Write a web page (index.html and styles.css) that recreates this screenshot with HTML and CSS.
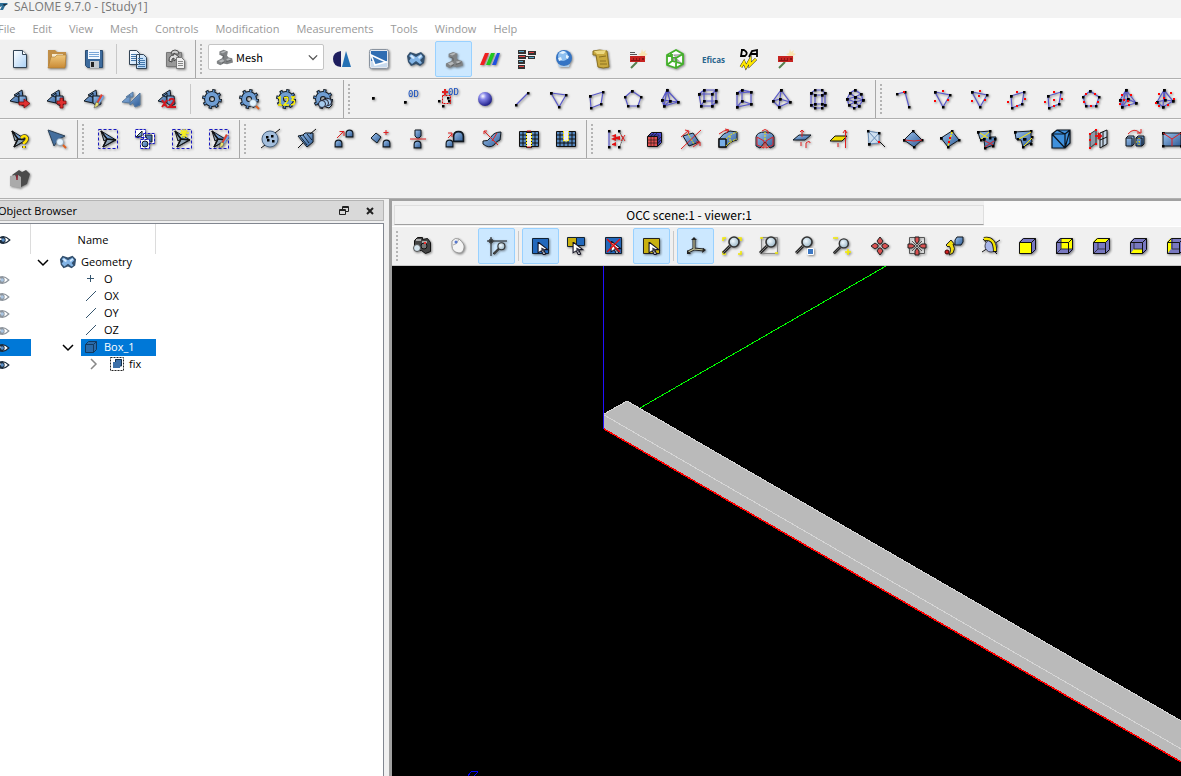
FILE: index.html
```
<!DOCTYPE html>
<html lang="en">

<head>
  <meta charset="UTF-8">
  <meta name="viewport" content="width=device-width, initial-scale=1.0">
  <title>SALOME 9.7.0 - [Study1]</title>
  <link rel="stylesheet" href="styles.css">
</head>

<body>
  <!-- shared shapes -->
  <svg class="defs" aria-hidden="true">
    <defs>
      <linearGradient id="blue" x1="0" y1="0" x2="1" y2="1">
        <stop offset="0" stop-color="#9cc3ee" />
        <stop offset="1" stop-color="#2f5c96" />
      </linearGradient>
      <linearGradient id="paper" x1="0" y1="0" x2="1" y2="1">
        <stop offset="0" stop-color="#ffffff" />
        <stop offset="1" stop-color="#a9d0f5" />
      </linearGradient>
      <linearGradient id="folder" x1="0" y1="0" x2="0" y2="1">
        <stop offset="0" stop-color="#f0c87c" />
        <stop offset="1" stop-color="#c98a35" />
      </linearGradient>
      <radialGradient id="ball" cx=".35" cy=".3" r=".7">
        <stop offset="0" stop-color="#ffffff" />
        <stop offset=".35" stop-color="#8484e8" />
        <stop offset="1" stop-color="#22228c" />
      </radialGradient>
      <radialGradient id="glass" cx=".4" cy=".4" r=".6">
        <stop offset="0" stop-color="#f2faff" />
        <stop offset="1" stop-color="#9db8c8" />
      </radialGradient>
      <marker id="node" markerUnits="userSpaceOnUse" markerWidth="4" markerHeight="4" refX="1" refY="1">
        <rect width="2.500" height="2.500" fill="#000" />
      </marker>
      <marker id="mid" markerUnits="userSpaceOnUse" markerWidth="4" markerHeight="4" refX="1" refY="1">
        <rect width="2" height="2" fill="#f00" />
      </marker>
      <symbol id="mesh" viewBox="0 0 20 20">
        <path class="solid" d="M0 12 9 4v10zM4 6l8-5 1 7H8z" />
        <path class="solid" d="M9 7h7l1 8-4 2-4-3z" />
      </symbol>
      <symbol id="gear" viewBox="0 0 20 20">
        <circle cx="10" cy="10" r="8" fill="none" stroke="#101820" stroke-width="4" stroke-dasharray="3 3.28" />
        <circle cx="10" cy="10" r="5" fill="none" stroke="#101820" stroke-width="6" />
        <circle cx="10" cy="10" r="8" fill="none" stroke="#5a8ac4" stroke-width="2" stroke-dasharray="1.6 4.68" stroke-dashoffset="-.7" />
        <circle cx="10" cy="10" r="5" fill="none" stroke="#6f9dd2" stroke-width="4" />
      </symbol>
      <symbol id="arrowmesh" viewBox="0 0 20 20">
        <path class="solid" d="M3 2l15 9-13 7 4-8z" />
        <path fill="#8fa3b4" stroke="#111" d="M3 2l6 8-3 2zM5 18l4-8 8 1z" />
        <path stroke="#111" fill="none" stroke-width="1.500" d="M3 2l6 8 9 1M9 10l-4 8" />
      </symbol>
      <symbol id="lens" viewBox="0 0 20 20">
        <path stroke="#222" stroke-width="3" d="M1 17l7-7" />
        <path stroke="#777" stroke-width="1" d="M1 17l7-7" />
        <circle cx="12" cy="6" r="5" fill="url(#glass)" stroke="#333" stroke-width="1.600" />
      </symbol>
      <symbol id="cursor" viewBox="0 0 12 12">
        <path fill="#fff" stroke="#112" d="M1 0v10l3-2 2 4 2-1-2-4h4z" />
        <path fill="#334" d="M4 5l4 2-2 1 1 3-3-4z" />
      </symbol>
      <symbol id="slab" viewBox="0 0 20 20">
        <path class="solid" d="M1 13L7 8h12l-6 5z" />
      </symbol>
      <symbol id="thumb" viewBox="0 0 8 8">
        <path class="solid" d="M1 7V4q0-3 3-3t3 3v3z" />
      </symbol>
      <symbol id="cube" viewBox="0 0 20 20">
        <path fill="#7878c0" d="M1 6l4-4h13v12l-4 4H1z" />
      </symbol>
      <symbol id="cubelines" viewBox="0 0 20 20">
        <path class="wire" d="M1.500 6.500h12v11h-12zM1.500 6.500l4-4h12v11l-4 4M13.500 6.500l4-4" />
      </symbol>
      <symbol id="geom" viewBox="0 0 20 20">
        <path fill="#33506e" d="M1 7l3-4 6 2 5-2 4 4-1 7-4 3-4-2-5 2-3-4z" />
        <path fill="#82b4e6" d="M3 7l2-2 5 3 5-3 2 3-3 3 2 3-2 1-4-3-4 3-3-3 2-3z" />
        <path fill="#d5ebff" d="M4 7l2-1 3 3-2 1zM12 8l3-2 1 1-3 3z" />
      </symbol>
      <symbol id="smesh" viewBox="0 0 20 20">
        <path fill="#7f8284" d="M1 14l6-3 1-3-4-1V3l5-2 5 2-1 5 2 2 4 1 1 5-7 2-4-1-4 2-4-2z" />
        <path fill="#b5b8ba" d="M5 4l5-2 2 1-4 2zM3 14l5-2 2 2-4 2zM12 12l3-1 3 1-4 2z" />
        <path stroke="#5d6062" fill="none" d="M6 7l3 1v3M12 15l6-2M7 17l3-2" />
      </symbol>
      <symbol id="eye" viewBox="0 0 16 12">
        <path fill="#fff" stroke="currentColor" stroke-width="1.400" d="M0 6q7-8 15 0-8 8-15 0z" />
        <circle cx="6" cy="6" r="4" fill="currentColor" />
        <circle cx="7" cy="6" r="2" fill="#5a8fc8" />
        <path fill="#fff" d="M3 4h2v2H3z" />
      </symbol>
      <symbol id="down" viewBox="0 0 12 12">
        <path fill="none" stroke="currentColor" stroke-width="1.500" d="M1 4l5 5 5-5" />
      </symbol>
      <symbol id="pen" viewBox="0 0 20 20">
        <path fill="#e04030" d="M17 5l3 2-6 10-3-1z" />
        <path fill="#6fa8e8" d="M19 6l1 2-6 9-1-1z" />
        <path fill="#e8e070" stroke="#555" stroke-width=".6" d="M12 13l3 1-1 3-4 2z" />
      </symbol>
      <symbol id="yacs" viewBox="0 0 20 20">
        <path fill="#f8e4b0" d="M14 0l1 3 3-2-1 3 3 1-3 2 1 3-3-1-2 1v-3l-3-2 3-1z" />
        <path stroke="#56804e" stroke-width="2" d="M3 19l6-6" />
        <path fill="#c62320" d="M2 7h15v6H2z" />
        <path fill="#8a1414" d="M3 11h2V9h1v2h2V9h1v2h2V9h1v3H3zM14 9h2v2h-2z" />
      </symbol>
    </defs>
  </svg>

  <header class="titlebar">
    <svg class="logo" width="10" height="12" viewBox="0 0 10 12"><path fill="#2d6e96" d="M0 2h8L5 5 3 9H0l2-4-2 1z" /><path fill="#1b2c3c" d="M3 3h5L4 5z" /></svg>
    <h1>SALOME 9.7.0 - [Study1]</h1>
  </header>

  <nav class="menubar">
    <a href="#">File</a>
    <a href="#">Edit</a>
    <a href="#">View</a>
    <a href="#">Mesh</a>
    <a href="#">Controls</a>
    <a href="#">Modification</a>
    <a href="#">Measurements</a>
    <a href="#">Tools</a>
    <a href="#">Window</a>
    <a href="#">Help</a>
  </nav>

  <div class="toolrow">
    <div class="toolbar first">
      <button class="tool" aria-label="New"><svg viewBox="0 0 20 20"><path fill="url(#paper)" stroke="#345" d="M3.500 1.500h9l4 4v13h-13z" /><path fill="#fff" stroke="#345" d="M12.500 1.500v4h4" /></svg></button>
      <button class="tool" aria-label="Open"><svg viewBox="0 0 20 20"><path fill="#c18f48" d="M1 1h7l2 2h9v14H1z" /><path fill="#f6ead0" d="M5 5h11v5H5z" /><path fill="url(#folder)" stroke="#a87834" stroke-width=".6" d="M1 19L4 8h4l2-2h9l-1 13z" /></svg></button>
      <button class="tool" aria-label="Save"><svg viewBox="0 0 20 20"><path fill="#3d6b9d" stroke="#2b4c70" d="M1.500 1.500h17v17h-15l-2-2z" /><path fill="#f4f9ff" d="M4 1h12v9H4z" /><path stroke="#7aa7d8" d="M5 3.500h10M5 5.500h10M5 7.500h10" /><path fill="#c4cad0" d="M6 12h9v7H6z" /><path fill="#222" d="M7 13h3v5H7z" /></svg></button>
      <span class="sep"></span>
      <button class="tool" aria-label="Copy"><svg viewBox="0 0 20 20"><path fill="url(#paper)" stroke="#345" d="M1.500 1.500h7l3 3v11h-10zM8.500 5.500h7l3 3v11h-10z" /><path stroke="#4477aa" d="M3 5.500h5M3 7.500h5M3 9.500h5M3 11.500h5M10 9.500h5M10 11.500h7M10 13.500h7M10 15.500h7M10 17.500h7" /></svg></button>
      <button class="tool" aria-label="Paste"><svg viewBox="0 0 20 20"><path fill="#999" stroke="#777" d="M1.500 3.500h15v14h-15z" /><path fill="#ccc" stroke="#555" d="M6 5q0-4 4-4t4 4z" /><path fill="#ddd" stroke="#444" d="M4 12q0-6 5-6V4l5 4-5 4v-3q-3 0-2 4z" /><path fill="#eee" stroke="#777" d="M11.500 8.500h5l3 3v8h-8z" /><path stroke="#888" d="M13 12.500h5M13 14.500h5M13 16.500h5" /></svg></button>
    </div>
    <div class="toolbar">
      <span class="grip"></span>
      <div class="combo">
        <svg class="combo-icon" viewBox="0 0 20 20"><use href="#smesh" /></svg>
        <select aria-label="Module"><option>Mesh</option></select>
        <svg class="combo-arrow" viewBox="0 0 12 12"><use href="#down" /></svg>
      </div>
      <button class="tool flat" aria-label="Shaper"><svg viewBox="0 0 20 20"><path fill="#1e1e5e" d="M9 2v16Q1 17 1 10t8-8z" /><path fill="#2470b4" d="M14 2l5 16h-9z" /></svg></button>
      <button class="tool" aria-label="Plane"><svg viewBox="0 0 20 20"><rect x=".5" y=".5" width="19" height="19" rx="2" fill="#e4e8ee" stroke="#8a94a0" /><path fill="#2f6db2" d="M2 2h16v10H2z" /><path fill="#c9dbee" d="M2 12h16v6H2z" /><path fill="#3b76b6" stroke="#fff" stroke-width="1.600" d="M2 6l15 7-11 3z" /></svg></button>
      <button class="tool" aria-label="Geometry"><svg viewBox="0 0 20 20"><use href="#geom" /></svg></button>
      <button class="tool active" aria-label="Mesh" aria-pressed="true"><svg viewBox="0 0 20 20"><use href="#smesh" x="1" y="2" width="18" height="18" /></svg></button>
      <button class="tool" aria-label="ParaViS"><svg viewBox="0 0 20 20"><path fill="#f02020" d="M5 4h4L4 16H0z" /><path fill="#1fc81f" d="M11 4h4l-5 12H6z" /><path fill="#1f50e0" d="M17 4h3l-4 12h-4z" /></svg></button>
      <button class="tool flat" aria-label="YACS"><svg viewBox="0 0 20 20"><path fill="#333" d="M1 1h8v4H1zM11 2h8v4h-8zM1 6h8v4H1zM11 7h7v3h-7zM1 11h7v4H1zM1 16h7v4H1zM8 7h4v1H8z" /><path stroke="#56a6c8" d="M2 2.500h5M12 8.500h5M2 12.500h4" /><path stroke="#e04040" d="M12 3.500h5M2 7.500h6M2 17.500h5" /></svg></button>
      <button class="tool" aria-label="Globe"><svg viewBox="0 0 20 20"><circle cx="10" cy="9" r="8" fill="#3574c4" /><circle cx="9" cy="7" r="5" fill="#8fc0f0" /><path fill="#e6f4ff" d="M5 4l4-2 3 1-3 2zM12 6l3 1-1 3-2-1zM4 9l3-1 1 3-3 1z" /><path fill="#b0d0ee" d="M4 15q6 4 12 0l-1 3H5z" /></svg></button>
      <button class="tool" aria-label="Document"><svg viewBox="0 0 20 20"><path fill="#c9a93e" stroke="#8a7020" d="M2 2q6-2 14 0l2 16q-6 2-11 0L5 6H2z" /><path fill="#ecd880" d="M3 2l12-1-2 4H6z" /><path stroke="#8a7020" d="M8 8l7-1M9 12h6M9 15h7" /></svg></button>
      <button class="tool flat" aria-label="Wizard"><svg viewBox="0 0 20 20"><use href="#yacs" /><path stroke="#555" d="M2 3.500h5M2 5.500h7" /></svg></button>
      <button class="tool" aria-label="HexaBlock"><svg viewBox="0 0 20 20"><path fill="#fff" stroke="#43b02a" stroke-width="1.800" stroke-linejoin="round" d="M2 6l9-5 7 4v10l-7 4-9-3zM2 6l9 3 7-4M11 9v10M6 7V3M7 12l-5 4M7 5v7l11 3" /></svg></button>
      <button class="tool flat" aria-label="Eficas"><svg class="wordmark" viewBox="0 0 20 20"><text x="0" y="14">Eficas</text></svg></button>
      <button class="tool flat" aria-label="ADAO"><svg viewBox="0 0 20 20"><path fill="none" stroke="#000" stroke-width="1.800" d="M2 1h3q5 3 1 6H2l1-6M10 8l3-6 5-1v7M11 5h7" /><path fill="none" stroke="#222" stroke-width="3" d="M2 18l3-5 2 5 4-7v5l6-6" /><path fill="none" stroke="#ffe800" stroke-width="2.200" d="M2 18l3-5 2 5 4-7v5l6-6" /></svg></button>
      <button class="tool flat" aria-label="Wizard two"><svg viewBox="0 0 20 20"><use href="#yacs" /></svg></button>
    </div>
  </div>

  <div class="toolrow">
    <div class="toolbar first">
      <button class="tool" aria-label="Import mesh"><svg viewBox="0 0 20 20"><use href="#mesh" /><path class="badge" d="M9 13h5v-3l6 4.500-6 4.500v-3H9z" /></svg></button>
      <button class="tool" aria-label="Create mesh"><svg viewBox="0 0 20 20"><use href="#mesh" /><path class="badge" d="M13 9h3v3h3v3h-3v4h-3v-4h-3v-3h3z" /></svg></button>
      <button class="tool" aria-label="Edit mesh"><svg viewBox="0 0 20 20"><use href="#mesh" /><use href="#pen" /></svg></button>
      <button class="tool" aria-label="Build compound"><svg viewBox="0 0 20 20"><path fill="url(#blue)" stroke="#55789e" d="M1 13l8-7v8zM5 8l7-5v5zM9 14l10-10v12l-5 2-2-4-3 2z" /></svg></button>
      <button class="tool" aria-label="Copy mesh"><svg viewBox="0 0 20 20"><use href="#mesh" /><path fill="none" stroke="#d01820" stroke-width="2" d="M4 11l5 7M9 11l-5 7M11 12q1-3 4-2 3 2-4 8h7" /></svg></button>
      <span class="sep"></span>
      <button class="tool" aria-label="Compute"><svg viewBox="0 0 20 20"><use href="#gear" /></svg></button>
      <button class="tool" aria-label="Preview"><svg viewBox="0 0 20 20"><use href="#gear" /><circle cx="14" cy="14" r="3.500" fill="#e4f4ff" stroke="#89a" stroke-width=".7" /><path stroke="#e06020" stroke-width="2" d="M17 17l3 3" /></svg></button>
      <button class="tool" aria-label="Evaluate"><svg viewBox="0 0 20 20"><use href="#gear" /><path fill="none" stroke="#fff200" stroke-width="1.400" d="M2 9l2-1v8M2 16h4M8 9q4-2 4 1 0 2-4 6h5M15 8h3l-2 3q4 0 2 4l-3 1" /></svg></button>
      <button class="tool" aria-label="Mesh order"><svg viewBox="0 0 20 20"><use href="#gear" /><path fill="#a6cbee" stroke="#111" d="M5 15l6-5 3-1 4 2 1 5-3 3z" /><circle cx="15" cy="13" r="3.500" class="pale" /><circle cx="12" cy="14" r="3.500" class="pale" /><circle cx="9" cy="15" r="3.500" class="pale" /></svg></button>
    </div>
    <div class="toolbar">
      <span class="grip"></span>
      <button class="tool" aria-label="Node"><svg viewBox="0 0 20 20"><path class="m" d="M9 9h0" /></svg></button>
      <button class="tool" aria-label="0D element"><svg viewBox="0 0 20 20"><path class="m" d="M4 13h0" /><text class="zero-d" x="7" y="8">0D</text></svg></button>
      <button class="tool" aria-label="0D on all nodes"><svg viewBox="0 0 20 20"><path class="dots" d="M1 12l9-3M5 17l6-5" /><rect x="4.500" y="6.500" width="8" height="8" fill="none" stroke="#e00000" stroke-dasharray="2 1" /><path stroke="#e02020" stroke-width="2" d="M7 0v6M4 3h6" /><text class="zero-d" x="10" y="6">0D</text></svg></button>
      <button class="tool" aria-label="Ball"><svg viewBox="0 0 20 20"><circle cx="10" cy="10" r="7" fill="url(#ball)" /></svg></button>
      <button class="tool" aria-label="Edge"><svg viewBox="0 0 20 20"><path class="m" d="M4 16L16 4" /></svg></button>
      <button class="tool" aria-label="Triangle"><svg viewBox="0 0 20 20"><path class="m" d="M2 4l15 2-7 12z" /></svg></button>
      <button class="tool" aria-label="Quadrangle"><svg viewBox="0 0 20 20"><path class="m" d="M4 7l13-4-2 12-10 4z" /></svg></button>
      <button class="tool" aria-label="Polygon"><svg viewBox="0 0 20 20"><path class="m" d="M9 2l9 6-3 9H5L2 8z" /></svg></button>
      <button class="tool" aria-label="Tetrahedron"><svg viewBox="0 0 20 20"><path class="m" d="M7 1l11 12-14 4zM2 11L7 1l3 11 8 1M2 11l2 6 6-5z" /></svg></button>
      <button class="tool" aria-label="Hexahedron"><svg viewBox="0 0 20 20"><path class="m" d="M2 5l2 12h11V5zM2 5l5-4h12l-4 4M15 17l4-4V1M7 1v11h12M4 17l3-5" /></svg></button>
      <button class="tool" aria-label="Pentahedron"><svg viewBox="0 0 20 20"><path class="m" d="M3 4l5-3 9 2v12l-14 3zM3 18l5-6V1M8 12l9 3M3 4l14-1" /></svg></button>
      <button class="tool" aria-label="Pyramid"><svg viewBox="0 0 20 20"><path class="m" d="M10 1L2 12l6 6 11-5zM8 18L10 1l-1 9-7 2M9 10l10 3" /></svg></button>
      <button class="tool" aria-label="Hexagonal prism"><svg viewBox="0 0 20 20"><path class="m" d="M3 4l4-3h7l3 3v12l-3 3H7l-4-3zM3 4l4 2h7l3-2M7 6v9M14 6v9M3 16l4-1h7l3 1" /></svg></button>
      <button class="tool" aria-label="Polyhedron"><svg viewBox="0 0 20 20"><path class="m" d="M10 1l6 4 2 6-4 6-5 2-5-3-2-6 3-6zM5 4l5 4 6-3M10 8v5l4 4M2 10l8 3M4 16l6-3 8-2M10 8L2 10M10 8l8 3" /></svg></button>
    </div>
    <div class="toolbar">
      <span class="grip"></span>
      <button class="tool" aria-label="Quadratic edge"><svg viewBox="0 0 20 20"><path class="m" d="M1 5l8-2 4 15" /><path class="q" d="M8 3h0" /></svg></button>
      <button class="tool" aria-label="Quadratic triangle"><svg viewBox="0 0 20 20"><path class="m" d="M2 3l15 3-7 12z" /><path class="q" d="M10 2L2 12l13-1" /></svg></button>
      <button class="tool" aria-label="Biquadratic triangle"><svg viewBox="0 0 20 20"><path class="m" d="M2 3l15 3-7 12z" /><path class="q" d="M10 2L2 12l13-1-6-4" /></svg></button>
      <button class="tool" aria-label="Quadratic quadrangle"><svg viewBox="0 0 20 20"><path class="m" d="M4 7l13-4-2 12-10 4z" /><path class="q" d="M10 3L1 13l9 4 8-7" /></svg></button>
      <button class="tool" aria-label="Biquadratic quadrangle"><svg viewBox="0 0 20 20"><path class="m" d="M4 7l13-4-2 12-10 4z" /><path class="q" d="M10 3L1 13l9 4 8-7-8 1" /></svg></button>
      <button class="tool" aria-label="Quadratic polygon"><svg viewBox="0 0 20 20"><path class="m" d="M9 2l9 6-3 9H5L2 8z" /><path class="q" d="M5 5L3 13l7 4 7-4-3-8" /></svg></button>
      <button class="tool" aria-label="Quadratic tetrahedron"><svg viewBox="0 0 20 20"><path class="m" d="M8 1l10 13-14 4zM2 11L8 1l2 9 8 4M2 11l2 7 6-8z" /><path class="q" d="M4 6l6 6 3-6M2 15l9 1M6 11h0" /></svg></button>
      <button class="tool" aria-label="Quadratic pyramid"><svg viewBox="0 0 20 20"><path class="m" d="M9 1L2 13l6 5 10-6zM8 18L9 1l1 10-8 2M10 11l8 1" /><path class="q" d="M4 5l12-1 3 6-6 6-9 1-3-3M9 9h0" /></svg></button>
    </div>
  </div>

  <div class="toolrow">
    <div class="toolbar first">
      <button class="tool" aria-label="Mesh information"><svg viewBox="0 0 20 20"><use href="#arrowmesh" x="-1" /><path fill="none" stroke="#443" stroke-width="4" d="M11 9q4-4 6 0 0 3-3 5v1M14 17v2" /><path fill="none" stroke="#ffe000" stroke-width="2.400" d="M11 9q4-4 6 0 0 3-3 5v1M14 17v2" /></svg></button>
      <button class="tool" aria-label="Find element"><svg viewBox="0 0 20 20"><path fill="#456f9e" stroke="#2c4258" d="M1 1l17 6-6 3-5 7z" /><circle cx="13" cy="13" r="3.500" fill="#e4f4ff" stroke="#89a" stroke-width=".7" /><path stroke="#e06020" stroke-width="2" d="M16 16l3 3" /></svg></button>
    </div>
    <div class="toolbar">
      <span class="grip"></span>
      <button class="tool" aria-label="Create group"><svg viewBox="0 0 20 20"><rect class="dash" x=".5" y=".5" width="19" height="19" /><use href="#arrowmesh" /></svg></button>
      <button class="tool" aria-label="Groups from geometry"><svg viewBox="0 0 20 20"><path fill="#fff" stroke="#1818c0" stroke-dasharray="3 1" d="M.5.5h10v8H.5zM8.500 4.500h11v10h-11z" /><path class="solid" d="M1 8l6-6v5zM10 6h7v7h-3z" /><rect x="5.500" y="10.500" width="9" height="9" fill="#fff" stroke="#1818c0" stroke-dasharray="3 1" /><circle cx="10" cy="15" r="3" class="solid" /></svg></button>
      <button class="tool" aria-label="New group"><svg viewBox="0 0 20 20"><rect class="dash" x=".5" y=".5" width="19" height="19" /><use href="#arrowmesh" /><path stroke="#f4ee20" stroke-width="1.500" d="M12 0v9M8 4h9M9 1l6 7M15 1L9 8" /></svg></button>
      <button class="tool" aria-label="Edit group"><svg viewBox="0 0 20 20"><rect class="dash" x=".5" y=".5" width="19" height="19" /><use href="#arrowmesh" /><use href="#pen" /></svg></button>
    </div>
    <div class="toolbar">
      <span class="grip"></span>
      <button class="tool" aria-label="Free nodes"><svg viewBox="0 0 20 20"><circle cx="10" cy="10" r="8" fill="#a3bedc" stroke="#4a6482" /><path class="dots" d="M7 8l5-1 1 5-5-1" /><path class="arr" d="M15 4l5-4M1 19l4-3" /></svg></button>
      <button class="tool" aria-label="Free borders"><svg viewBox="0 0 20 20"><path class="solid" d="M1 7l5-1 2-2h8v9l-6 5z" /><path stroke="#123" fill="none" d="M3 7l7 9M6 6l6 8M10 5l5 6" /><path class="arr" d="M13 5l6-5M1 19l5-5" /></svg></button>
      <button class="tool" aria-label="Translate"><svg viewBox="0 0 20 20"><use href="#thumb" x="0" y="10" width="9" height="9" /><use href="#thumb" x="11" y="0" width="9" height="9" /><path class="move" d="M3 9l6-6M5.500 2.500H10V7" /></svg></button>
      <button class="tool" aria-label="Rotate"><svg viewBox="0 0 20 20"><path class="solid" d="M0 9l5-5 5 4-4 6z" /><use href="#thumb" x="11" y="10" width="9" height="9" /><path class="move" d="M15 1v5M12.500 3.500h5" /></svg></button>
      <button class="tool" aria-label="Symmetry"><svg viewBox="0 0 20 20"><path class="solid" d="M7 1h6v6l-2 2H9L7 7z" /><use href="#thumb" x="5" y="11" width="9" height="9" /><path class="move" d="M2 10h16" /></svg></button>
      <button class="tool" aria-label="Scale"><svg viewBox="0 0 20 20"><use href="#thumb" x="0" y="10" width="9" height="9" /><use href="#thumb" x="7" y="1" width="13" height="13" /><path class="move" d="M3 9l4-4M3 4h4v4" /></svg></button>
      <button class="tool" aria-label="Sewing"><svg viewBox="0 0 20 20"><path class="solid" d="M1 12q5 1 8-4 3-5 10-5l-1 8q-4 1-6 5-5 4-11-1z" /><path class="move" d="M2 2l14 14M10 12l5-8M2 5V2h3" /></svg></button>
      <button class="tool" aria-label="Merge nodes"><svg viewBox="0 0 20 20"><path fill="#5688c0" stroke="#111" d="M.5 2.500h19v15H.5z" /><path class="grid" d="M0 6h20M0 10h20M0 14h20M4 2v16M16 2v16" /><path fill="#efefef" stroke="#111" d="M7.500 3.500h5v15h-5z" /><path class="move" d="M8 2h4M8 18h4" /><path stroke="#ffe800" d="M7.500 4v13M12.500 4v13" stroke-dasharray="2 1" /></svg></button>
      <button class="tool" aria-label="Merge elements"><svg viewBox="0 0 20 20"><path fill="#5688c0" stroke="#111" d="M.5 2.500h19v15H.5z" /><path class="grid" d="M0 6h20M0 10h20M0 14h20M4 2v16M8 12v6M12 12v6M16 2v16" /><path fill="#efefef" stroke="#ffe800" stroke-dasharray="2 1" d="M7.500 2v10h5V2" /></svg></button>
    </div>
    <div class="toolbar">
      <span class="grip"></span>
      <button class="tool" aria-label="Node to point"><svg viewBox="0 0 20 20"><path class="m" d="M2 2v16" /><path fill="none" stroke="#111" stroke-dasharray="1 1" d="M12 2l4 7-3 8" /><path class="dots" d="M12 2v16" /><path fill="#e01010" d="M4 7l5-2v3l4-1v4l-4-1v2l-5-2 4-2zM5 15l4-2v4l-4-1z" /><path class="move" d="M14 6l4 6M18 6l-4 6" /></svg></button>
      <button class="tool" aria-label="Split cube"><svg viewBox="0 0 20 20"><path fill="#4848d0" stroke="#111" d="M3.500 7.500l4-4h10v10l-4 4" /><path fill="#e05050" stroke="#111" d="M3.500 7.500h10v10h-10z" /><path class="fine" d="M4 11h10l4-4M4 14h10l4-4M7 17V7l4-4M10 17V7l4-4M5 6h10v10" /></svg></button>
      <button class="tool" aria-label="Extrusion along line"><svg viewBox="0 0 20 20"><path class="solid" d="M2 7l10-3 6 9-10 4z" /><path stroke="#ffe800" stroke-dasharray="2 1" d="M7 5l6 10" /><path class="move" d="M0 20L20 1M0 8l7-6M4 1l4 1-1 3M12 18l7-5M15 13h4v4" /></svg></button>
      <button class="tool" aria-label="Extrusion"><svg viewBox="0 0 20 20"><path class="solid" d="M1 10q4-6 11-8l7 1v8q-7 1-11 7H1z" /><path fill="#78aee6" stroke="#111" stroke-width="1.500" d="M1 10h7v8H1z" /><path stroke="#ffe800" stroke-dasharray="2 1" fill="none" d="M8 10q4-5 11-7M8 17q4-5 11-7M12 7v7" /><path class="move" d="M1 5q5-4 9-4M7 0l4 1-3 3" /></svg></button>
      <button class="tool" aria-label="Revolution"><svg viewBox="0 0 20 20"><path class="solid" d="M1 17V8q1-5 9-5t9 5v9l-4 2-5-6-5 6z" /><path class="move" d="M2 8l7 4v7l-7-3zM18 8l-7 4v7l7-3zM7 2q3-3 6 0v3" /><path stroke="#ffe800" stroke-dasharray="2 1" d="M10 3v9" /></svg></button>
      <button class="tool" aria-label="Orientation"><svg viewBox="0 0 20 20"><use href="#slab" y="-2" /><path class="move" d="M10 1v7M8 3l2-2 2 2M14 19v-5q4-3 4 0M9 13v4" /></svg></button>
      <button class="tool" aria-label="Reorient faces"><svg viewBox="0 0 20 20"><path fill="#f0dc00" stroke="#111" d="M1 12l5-5h12l-5 5z" /><path class="move" d="M16.500 1v18M14 4l2-3 2 3M9 18v-4" /></svg></button>
      <button class="tool" aria-label="Move node"><svg viewBox="0 0 20 20"><path fill="#cfdfef" stroke="#678bb4" d="M2 2l11 2v10l-10 1zM2 2l11 12M13 4L3 15" /><path class="dots" d="M2 2l11 2M3 15h0" /><path class="q" d="M13 13h0" /><path class="arr" d="M14 13l5 5" /></svg></button>
      <button class="tool" aria-label="Diagonal inversion"><svg viewBox="0 0 20 20"><path class="solid" d="M1 11l9-9 9 9-8 7z" /><path class="dots" d="M1 11l9-9 9 9-8 7z" /><path class="move" d="M2 11l9 1 8-1" /></svg></button>
      <button class="tool" aria-label="Union of two triangles"><svg viewBox="0 0 20 20"><path class="solid" d="M1 9l11-7 7 9-11 7z" /><path class="dots" d="M1 9l11-7 7 9-11 7z" /><path stroke="#ffe800" stroke-width="1.500" stroke-dasharray="2 1" d="M12 3L8 17" /><path class="q" d="M10 9l-1 4" /></svg></button>
      <button class="tool" aria-label="Union of triangles"><svg viewBox="0 0 20 20"><path class="solid" d="M1 3l12-1v6h6l-2 8-9 3-1-8-4-1z" /><path class="dots" d="M1 3l12-1v7l-9 2zM7 10h11l-2 7-8 2z" /><path stroke="#ffe800" d="M3 4l8 5M12 3L4 10" /><path class="move" d="M8 12l8 4M8 18l9-6" /></svg></button>
      <button class="tool" aria-label="Cutting of quadrangles"><svg viewBox="0 0 20 20"><path class="solid" d="M1 3l16-1v5l1 6-9 5-2-7-5-1z" /><path class="dots" d="M1 3l16-1-6 8H4zM10 10l8-2-1 7-8 3z" /><path stroke="#ffe800" d="M17 3L5 10M10 17l8-8" /></svg></button>
      <button class="tool" aria-label="Splitting volumes"><svg viewBox="0 0 20 20"><path fill="#3f90dc" stroke="#0b1520" stroke-width="1.200" d="M1 5l5-4h13v13l-5 5H1zM1 5h13v14M14 5l5-4M1 5l13 14M6 1l8 4M14 19L19 1" /></svg></button>
      <button class="tool" aria-label="Split biquadratic"><svg viewBox="0 0 20 20"><path fill="#c5d5e5" stroke="#111" d="M12 4l7-3v14l-7 4zM12 11l7-3M15 3v14" /><path fill="#8c99a8" stroke="#333" d="M2 5l6-4v13l-6 5z" /><path class="q" d="M2 5l6-4v6L2 11v8l6-4" /><path stroke="#e01010" stroke-width="2" d="M7 7h6M10 4l3 3-3 3" /></svg></button>
      <button class="tool" aria-label="Convert to quadratic"><svg viewBox="0 0 20 20"><path class="solid" d="M1 9l2-2h6v8l-2 2H1zM11 9l2-2h6v8l-2 2h-6z" /><path class="arr" d="M1 9h6v8M11 9h6v8" /><path stroke="#ffe800" stroke-dasharray="1 2" d="M11 13h6M14 9v8" /><path class="move" d="M3 5q6-7 12-1M12 4h4V0" /></svg></button>
      <button class="tool" aria-label="Pattern mapping"><svg viewBox="0 0 20 20"><path class="solid" d="M1 4h18v13H1z" /><path class="dots" d="M1 4h18v13H1z" /><path class="move" d="M1 4l9 6 9-6M10 10v7" /></svg></button>
    </div>
  </div>

  <div class="toolrow">
    <div class="toolbar first">
      <button class="tool" aria-label="Plugin"><svg viewBox="0 0 20 20"><path fill="#4b4b4b" d="M2 6l7-5 3 2 4-2 4 4-3 10-6 3z" /><path fill="#aaa" d="M0 7l5-1 2 4 1-4 3 2v11l-11-2z" /><path stroke="#902030" stroke-width="1.500" d="M7 6v5" /></svg></button>
    </div>
  </div>

  <main class="desk">
    <section class="dock">
      <div class="dock-title">
        <h2>Object Browser</h2>
        <button aria-label="Float"><svg width="10" height="10" viewBox="0 0 10 10"><path fill="none" stroke="#222" d="M3.500 3V.5h6v5H7M3 1.500h7M.5 3.500h6v5h-6zM1 4.500h6" /></svg></button>
        <button aria-label="Close"><svg width="8" height="8" viewBox="0 0 8 8"><path stroke="#222" stroke-width="2" d="M1 1l6 6M7 1L1 7" /></svg></button>
      </div>
      <div class="tree-box">
        <table class="tree">
          <thead>
            <tr>
              <th class="vis"><svg class="eye" aria-label="Visibility"><use href="#eye" /></svg></th>
              <th>Name</th>
            </tr>
          </thead>
          <tbody>
            <tr>
              <td class="vis"></td>
              <td><div class="node"><span class="fold"><svg><use href="#down" /></svg></span><span class="label"><svg class="big" viewBox="0 0 20 20"><use href="#geom" /></svg>Geometry</span></div></td>
            </tr>
            <tr class="hidden-obj">
              <td class="vis"><svg class="eye"><use href="#eye" /></svg></td>
              <td><div class="node lv1"><span class="fold"></span><span class="label"><svg viewBox="0 0 16 16"><path stroke="#35556e" d="M3 7.500h7M6.500 4v7" /></svg>O</span></div></td>
            </tr>
            <tr class="hidden-obj">
              <td class="vis"><svg class="eye"><use href="#eye" /></svg></td>
              <td><div class="node lv1"><span class="fold"></span><span class="label"><svg viewBox="0 0 16 16"><path stroke="#35556e" d="M2 13L12 3" /></svg>OX</span></div></td>
            </tr>
            <tr class="hidden-obj">
              <td class="vis"><svg class="eye"><use href="#eye" /></svg></td>
              <td><div class="node lv1"><span class="fold"></span><span class="label"><svg viewBox="0 0 16 16"><path stroke="#35556e" d="M2 13L12 3" /></svg>OY</span></div></td>
            </tr>
            <tr class="hidden-obj">
              <td class="vis"><svg class="eye"><use href="#eye" /></svg></td>
              <td><div class="node lv1"><span class="fold"></span><span class="label"><svg viewBox="0 0 16 16"><path stroke="#35556e" d="M2 13L12 3" /></svg>OZ</span></div></td>
            </tr>
            <tr class="selected">
              <td class="vis"><svg class="eye"><use href="#eye" /></svg></td>
              <td><div class="node lv1"><span class="fold"><svg><use href="#down" /></svg></span><span class="label"><svg viewBox="0 0 16 16"><path fill="#2a6aa8" stroke="#123a60" d="M1.500 5.500l3-3h8v8l-3 3h-8zM1.500 5.500h8v8M9.500 5.500l3-3" /></svg>Box_1</span></div></td>
            </tr>
            <tr>
              <td class="vis"><svg class="eye"><use href="#eye" /></svg></td>
              <td><div class="node lv2"><span class="fold closed"><svg><use href="#down" /></svg></span><span class="label"><svg viewBox="0 0 16 16"><path fill="none" stroke="#222" stroke-dasharray="2 1" d="M1.500 1.500h13v13h-13z" /><path fill="#3d70a8" d="M6 3h7v7h-2v2H4V6h2z" /><path stroke="#14304c" fill="none" d="M6.500 6V3.500h6V10H11" /></svg>fix</span></div></td>
            </tr>
          </tbody>
        </table>
      </div>
    </section>

    <section class="viewer">
      <div class="tabs">
        <button class="tab">OCC scene:1 - viewer:1</button>
      </div>
      <div class="toolbar view-tools">
        <span class="grip"></span>
        <button class="tool" aria-label="Dump view"><svg viewBox="0 0 20 20"><path fill="#444" stroke="#111" d="M2.500 4.500l3-3h5v2l5-1 3 4v9l-5 2-4-3H2.500z" /><path fill="#aaa" d="M4 3h5v2H4zM10 5h5v2h-5z" /><circle cx="5" cy="12" r="3.500" fill="#d4e4ee" stroke="#555" /><circle cx="12" cy="10" r="3" fill="#777" stroke="#111" /><path fill="#f03030" d="M12 6h2v2h-2z" /></svg></button>
        <button class="tool" aria-label="Interaction style"><svg viewBox="0 0 20 20"><path fill="#f4f4f4" stroke="#999" d="M3 5q3-4 7-2 6 5 5 9-1 5-5 5-7-1-7-7z" /><path fill="none" stroke="#aaa" d="M4 9q4 0 6-6" /><circle cx="7" cy="6" r="1.500" fill="#5577d0" /></svg></button>
        <button class="tool active" aria-label="Zoom style" aria-pressed="true"><svg viewBox="0 0 20 20"><path class="arr" d="M4 1v19M0 5h20" /><circle cx="4" cy="5" r="2" fill="none" stroke="#333" /><use href="#lens" x="6" y="6" width="14" height="14" /></svg></button>
        <span class="sep"></span>
        <button class="tool active" aria-label="Rectangle selection" aria-pressed="true"><svg viewBox="0 0 20 20"><path fill="#2268bc" stroke="#123" d="M1.500 2.500h16v15h-16z" /><use href="#cursor" x="6" y="6" width="13" height="13" /></svg></button>
        <button class="tool" aria-label="Polygon selection"><svg viewBox="0 0 20 20"><path fill="#c8b010" stroke="#123" d="M.5 1.500h9v9h-9z" /><path fill="#2268bc" stroke="#123" d="M9.500 1.500h8v8h-8z" /><use href="#cursor" x="5" y="6" width="13" height="13" /></svg></button>
        <button class="tool" aria-label="No selection"><svg viewBox="0 0 20 20"><path fill="#2268bc" stroke="#123" d="M1.500 1.500h16v16h-16z" /><use href="#cursor" x="6" y="5" width="13" height="13" /><path stroke="#e01010" stroke-width="1.500" d="M3 3l13 13M16 3L3 16" /></svg></button>
        <button class="tool active" aria-label="Circle selection" aria-pressed="true"><svg viewBox="0 0 20 20"><path fill="#c8b010" stroke="#222" d="M1.500 2.500h16v15h-16z" /><use href="#cursor" x="6" y="6" width="13" height="13" /></svg></button>
        <span class="sep"></span>
        <button class="tool active" aria-label="Trihedron" aria-pressed="true"><svg viewBox="0 0 20 20"><path fill="none" stroke="#222" stroke-width="3" d="M8 3v10l10 1M8 13l-6 3" /><path fill="none" stroke="#c8c8a0" stroke-width="1.200" d="M8 3v10l10 1M8 13l-6 3" /><path fill="#222" d="M5 4l3-3 3 3zM17 12l3 2-4 3zM1 14l4 4H1z" /></svg></button>
        <button class="tool" aria-label="Fit all"><svg viewBox="0 0 20 20"><path class="corner" d="M1 5V2h3M16 2h3v3M1 15v3h3M19 15v3h-3" /><use href="#lens" /></svg></button>
        <button class="tool" aria-label="Fit area"><svg viewBox="0 0 20 20"><path fill="none" stroke="#888" d="M2.500 1.500h16v16h-16z" /><path class="corner" d="M1 2h3M16 17h3" /><use href="#lens" /></svg></button>
        <button class="tool" aria-label="Fit selection"><svg viewBox="0 0 20 20"><use href="#lens" x="-1" /><path fill="#3d78c4" stroke="#fff" d="M11.500 12.500h6v6h-6z" /></svg></button>
        <button class="tool" aria-label="Zoom"><svg viewBox="0 0 20 20"><use href="#lens" x="0" y="2" width="18" height="18" /><path class="corner" d="M0 2h5M12 16h6M15 13v6" /></svg></button>
        <button class="tool" aria-label="Pan"><svg viewBox="0 0 20 20"><path class="pan" d="M10 1l3 4-2 3H9L7 5zM10 19l3-4-2-3H9l-2 3zM1 10l4-3 3 2v2l-3 2zM19 10l-4-3-3 2v2l3 2z" /></svg></button>
        <button class="tool" aria-label="Global pan"><svg viewBox="0 0 20 20"><path fill="none" stroke="#555" d="M2.500 1.500h15v16h-15zM5 5l10 10M15 5L5 15" /><path class="pan" d="M8 1h4v4l-2 3-2-3zM8 19h4v-4l-2-3-2 3zM1 8v4h4l3-2-3-2zM19 8v4h-4l-3-2 3-2z" /></svg></button>
        <button class="tool" aria-label="Rotation point"><svg viewBox="0 0 20 20"><path class="solid" d="M11 4l2-3h6v5l-2 3h-6z" /><path fill="#f0dc10" stroke="#222" d="M2 9l5-5 4 5-2-1q3 5 0 9l-4 2q3-6 0-9l-1 1z" /><circle cx="3" cy="16" r="2" fill="#d02020" stroke="#400" /></svg></button>
        <button class="tool" aria-label="Rotate view"><svg viewBox="0 0 20 20"><path class="arr" d="M1 16L19 4M2 3l14 15" /><circle cx="10" cy="10" r="6" fill="#a9b6ea" stroke="#445" /><path fill="none" stroke="#111" stroke-width="4" d="M3 3q11-2 11 13" /><path fill="none" stroke="#f4e400" stroke-width="2.400" d="M3 3q11-2 11 12" /></svg></button>
        <button class="tool" aria-label="Front"><svg viewBox="0 0 20 20"><use href="#cube" /><path fill="#ff0" d="M1 6h13v12H1z" /><use href="#cubelines" /></svg></button>
        <button class="tool" aria-label="Back"><svg viewBox="0 0 20 20"><use href="#cube" /><path fill="#ff0" d="M6 2h12v11H6z" /><path class="thin" d="M6 3v10h12M6 13l-5 5" /><use href="#cubelines" /></svg></button>
        <button class="tool" aria-label="Top"><svg viewBox="0 0 20 20"><use href="#cube" /><path fill="#ff0" d="M1 6l4-4h13l-4 4z" /><path class="thin" d="M6 7v6h8M6 13l-5 5" /><use href="#cubelines" /></svg></button>
        <button class="tool" aria-label="Bottom"><svg viewBox="0 0 20 20"><use href="#cube" /><path fill="#ff0" d="M1 18l4-5h9v5z" /><path class="thin" d="M5 7v6h9" /><use href="#cubelines" /></svg></button>
        <button class="tool" aria-label="Left"><svg viewBox="0 0 20 20"><use href="#cube" /><path fill="#ff0" d="M1 6l4-4v11l-4 5z" /><path class="thin" d="M6 3v10h8" /><use href="#cubelines" /></svg></button>
      </div>
      <svg class="scene" role="img" aria-label="Box_1 in the OCC viewer">
        <path fill="#bababa" d="M212 148l23-13 1154 666v41L212 163z" />
        <path fill="none" stroke="#d6d6d6" d="M212 149l1177 681M212 148l23-13 1154 666" />
        <path stroke="#2010ff" d="M211.500 0v163" />
        <path stroke="#0f0" d="M248 142L494 0" />
        <path stroke="#f00" stroke-width="1.500" d="M212 163l1177 679" />
        <path fill="none" stroke="#00f" d="M79 505h7M86 506l-5 5M79 506l-3 4" />
      </svg>
    </section>
  </main>
</body>

</html>
```
FILE: styles.css
```
* {
  box-sizing: border-box;
}

body {
  margin: 0;
  height: 100vh;
  display: flex;
  flex-direction: column;
  overflow: hidden;
  background: #f0f0f0;
  color: #000;
  font: 11px/16px "Open Sans", "Noto Sans", sans-serif;
}

button {
  margin: 0;
  padding: 0;
  border: 0;
  background: none;
  color: inherit;
  font: inherit;
}

h1,
h2 {
  margin: 0;
  font-size: inherit;
  font-weight: normal;
}

.defs {
  position: absolute;
  width: 0;
  height: 0;
}

/* title and menu */
.titlebar {
  flex: none;
  display: flex;
  align-items: center;
  gap: 4px;
  height: 18px;
  padding-bottom: 4px;
  background: #f3f3f3;
  color: #777;
}

.titlebar h1 {
  font-size: 12px;
}

.menubar {
  flex: none;
  display: flex;
  gap: 17px;
  height: 21px;
  margin-left: -2px;
  padding-top: 3px;
  background: #fff;
}

.menubar a {
  color: #999;
  text-decoration: none;
}

/* toolbars */
.toolrow {
  flex: none;
  display: flex;
  height: 40px;
  border-top: 1px solid #fafafa;
  border-bottom: 1px solid #b0b0b0;
}

.toolbar {
  display: flex;
  align-items: center;
  flex: none;
  padding-right: 1px;
  border-right: 1px solid #a8a8a8;
}

.toolbar.first {
  padding-left: 2px;
}

.toolrow .toolbar:last-child {
  border-right: 0;
}

.grip {
  flex: none;
  width: 12px;
  height: 32px;
  background: radial-gradient(circle, #b4b4b4 1px, transparent 1px) 3px 0 / 4px 4px repeat-y;
}

.sep {
  flex: none;
  width: 7px;
  height: 30px;
  background: linear-gradient(#c8c8c8, #c8c8c8) 3px 0 / 1px 100% no-repeat;
}

.tool {
  flex: none;
  display: grid;
  place-items: center;
  width: 37px;
  height: 36px;
  padding-right: 1px;
  border-radius: 2px;
}

.tool.active {
  padding-right: 0;
  border: 1px solid #99d1ff;
  background: #cce8ff;
}

.tool svg {
  width: 20px;
  height: 20px;
  overflow: visible;
  filter: drop-shadow(1px 1px 1px rgba(0, 0, 0, .45));
}

.tool.flat svg {
  filter: none;
}

.combo {
  display: grid;
  grid-template-columns: 30px 1fr 20px;
  align-items: center;
  width: 116px;
  height: 26px;
  margin-bottom: 4px;
  border: 1px solid #c4c4c4;
  border-radius: 2px;
  background: #fff;
}

.combo select {
  grid-area: 1 / 1 / 2 / 4;
  width: 100%;
  height: 22px;
  padding: 0 0 0 27px;
  border: 0;
  background: none;
  color: #000;
  font: 11px "Noto Sans CJK JP", "Liberation Sans", sans-serif;
  appearance: none;
}

.combo-icon {
  grid-area: 1 / 1;
  width: 17px;
  height: 17px;
  margin-left: 7px;
}

.combo-arrow {
  grid-area: 1 / 3;
  justify-self: end;
  width: 10px;
  height: 10px;
  margin-right: 5px;
  color: #555;
}

/* icon paint */
.solid {
  fill: url(#blue);
  stroke: #101820;
}

.m {
  fill: none;
  stroke: #5858c8;
  stroke-width: 1.200;
  marker: url(#node);
}

.dots {
  fill: none;
  stroke: none;
  marker: url(#node);
}

.q {
  fill: none;
  stroke: none;
  marker: url(#mid);
}

.badge {
  fill: #e03030;
  stroke: #801010;
  stroke-width: .8;
}

.pale {
  fill: #a6cbee;
  stroke: #223;
}

.arr {
  fill: none;
  stroke: #111;
}

.move {
  fill: none;
  stroke: #e02020;
}

.grid {
  fill: none;
  stroke: #111;
}

.fine {
  fill: none;
  stroke: #111;
  stroke-width: .6;
}

.dash {
  fill: none;
  stroke: #1818c0;
  stroke-dasharray: 3 2;
}

.wire {
  fill: none;
  stroke: #111;
}

.thin {
  fill: none;
  stroke: #334;
}

.corner {
  fill: none;
  stroke: #f4ea00;
  stroke-width: 1.500;
}

.pan {
  fill: #d85050;
  stroke: #222;
}

.zero-d {
  fill: #1850c0;
  font: 9px "DejaVu Sans Mono", monospace;
}

.wordmark {
  fill: #28658c;
  font: bold 8px "Open Sans", sans-serif;
}

/* work area */
.desk {
  flex: 1;
  display: flex;
  gap: 5px;
  min-height: 0;
}

.dock {
  flex: none;
  display: flex;
  flex-direction: column;
  gap: 2px;
  width: 384px;
  padding-top: 1px;
}

.dock-title {
  display: flex;
  align-items: center;
  gap: 17px;
  height: 21px;
  padding-right: 9px;
  border: 1px solid #b4b4b4;
  border-left: 0;
  background: #d9d9d9;
}

.dock-title h2 {
  flex: 1;
  margin-left: -2px;
  padding-top: 1px;
}

.dock-title button {
  flex: none;
  display: grid;
  place-items: center;
  height: 16px;
}

.tree-box {
  flex: 1;
  border: 1px solid #828790;
  border-width: 1px 1px 0 0;
  background: #fff;
}

.tree {
  width: 156px;
  table-layout: fixed;
  border-collapse: separate;
  border-spacing: 0;
}

.tree th {
  height: 30px;
  padding: 2px 0 0;
  border-right: 1px solid #dcdcdc;
  font-weight: normal;
}

.tree td {
  height: 17px;
  padding: 0;
}

.tree .vis {
  width: 31px;
  text-align: left;
}

.eye {
  display: block;
  width: 14px;
  height: 10px;
  margin-left: -3px;
  color: #1d2c3c;
}

td .eye {
  margin-left: -4px;
}

.hidden-obj .eye {
  opacity: .5;
}

.node {
  display: flex;
  height: 17px;
}

.node.lv1 {
  padding-left: 25px;
}

.node.lv2 {
  padding-left: 50px;
}

.fold {
  flex: none;
  display: grid;
  place-items: center;
  width: 25px;
  padding: 0 2px 2px 0;
}

.fold svg {
  width: 12px;
  height: 12px;
}

.fold.closed {
  color: #888;
}

.fold.closed svg {
  transform: rotate(-90deg);
}

.label {
  flex: 1;
  display: flex;
  align-items: center;
  gap: 4px;
  padding: 0 0 2px 3px;
}

.label svg {
  width: 16px;
  height: 16px;
}

.label .big {
  width: 18px;
  height: 18px;
}

.selected .vis,
.selected .label {
  background: #0078d7;
  color: #fff;
}

.viewer {
  flex: 1;
  display: flex;
  flex-direction: column;
  min-width: 0;
  border: solid #a0a0a0;
  border-width: 2px 0 0 3px;
}

.tabs {
  flex: none;
  display: flex;
  height: 25px;
  padding: 4px 0 1px 2px;
  background: linear-gradient(90deg, #f0f0f0 75%, #fafafa 75%);
}

.tab {
  width: 75%;
  padding-bottom: 2px;
  border: 1px solid #dedede;
  border-bottom-color: #a0a0a0;
  background: #f2f2f2;
  font: 12px "Noto Sans CJK JP", "Liberation Sans", sans-serif;
}

.view-tools {
  height: 40px;
  padding: 0;
  overflow: hidden;
  border: 0;
  border-top: 1px solid #fff;
  border-bottom: 1px solid #c8c8c8;
}

.scene {
  flex: 1;
  width: 100%;
  min-height: 0;
  background: #000;
  shape-rendering: crispEdges;
}
```
